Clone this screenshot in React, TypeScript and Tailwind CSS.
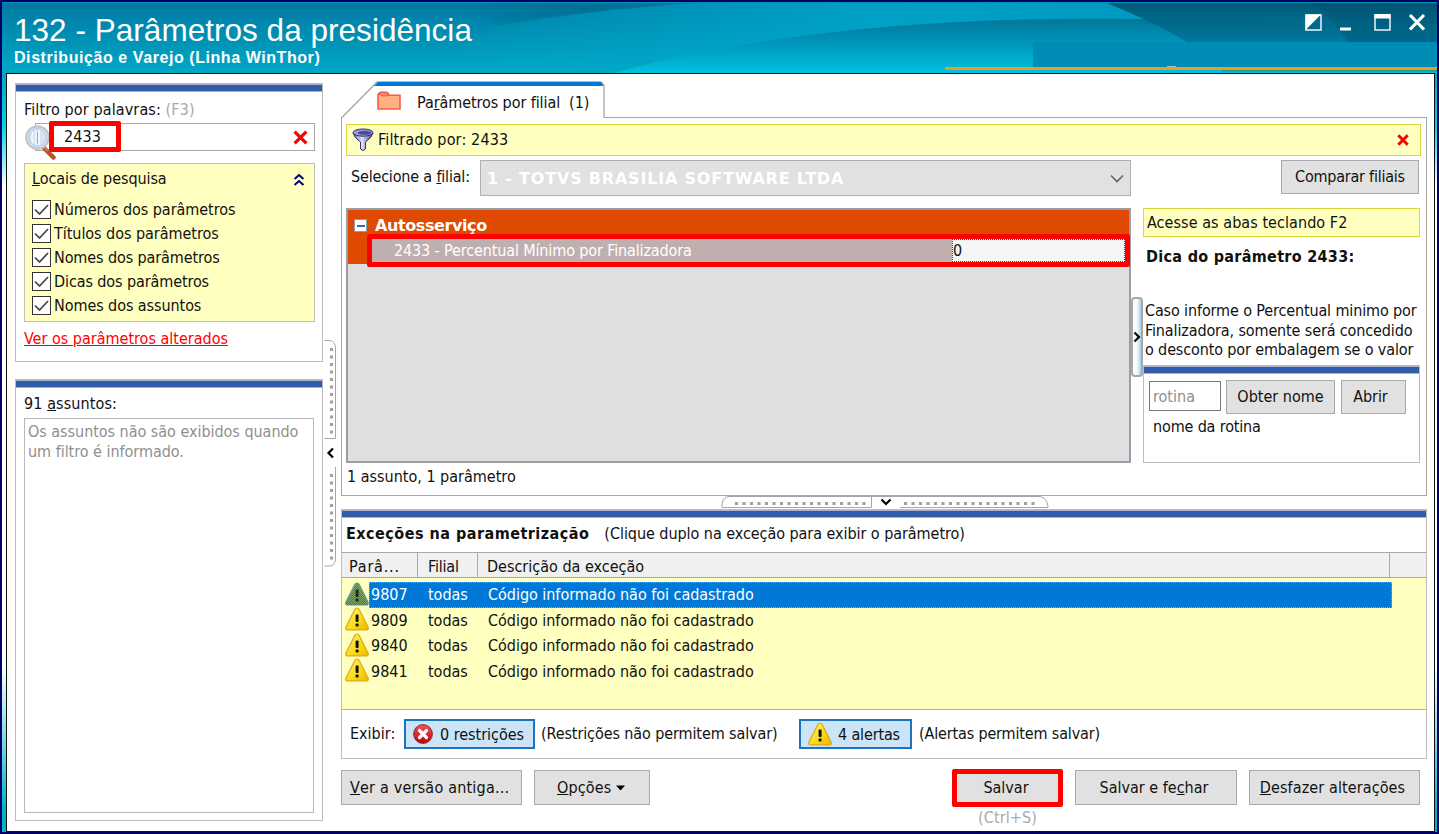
import React, { useState } from "react";

const searchPlaces = [
  { title: "Números dos parâmetros", tracking: "tracking-[-0.04px]" },
  { title: "Títulos dos parâmetros", tracking: "tracking-[-0.04px]" },
  { title: "Nomes dos parâmetros", tracking: "tracking-[-0.1px]" },
  { title: "Dicas dos parâmetros", tracking: "tracking-[-0.1px]" },
  { title: "Nomes dos assuntos", tracking: "tracking-[-0.07px]" },
];

const exceptions = [
  { id: "9807", branch: "todas", text: "Código informado não foi cadastrado" },
  { id: "9809", branch: "todas", text: "Código informado não foi cadastrado" },
  { id: "9840", branch: "todas", text: "Código informado não foi cadastrado" },
  { id: "9841", branch: "todas", text: "Código informado não foi cadastrado" },
];

function HeaderBackground() {
  return (
    <svg
      className="absolute inset-0 h-full w-full"
      viewBox="2 2 1435 71"
      preserveAspectRatio="none"
    >
      <defs>
        <linearGradient id="base" x1="0" y1="0" x2="0" y2="1">
          <stop offset="0" stopColor="#0078a2" />
          <stop offset="1" stopColor="#00a8c6" />
        </linearGradient>
        <linearGradient id="fade" x1="0" y1="0" x2="1" y2="0">
          <stop offset="0" stopColor="#00b0d0" stopOpacity="0" />
          <stop offset="0.45" stopColor="#00a9cc" stopOpacity="0.8" />
          <stop offset="1" stopColor="#0098c2" stopOpacity="0.8" />
        </linearGradient>
        <linearGradient id="shade" x1="0" y1="0" x2="1" y2="0">
          <stop offset="0" stopColor="#006a90" stopOpacity="0" />
          <stop offset="0.5" stopColor="#006a90" stopOpacity="0.7" />
          <stop offset="1" stopColor="#00789e" stopOpacity="0.7" />
        </linearGradient>
        <linearGradient id="wave" x1="0" y1="0" x2="0" y2="1">
          <stop offset="0" stopColor="#00769a" />
          <stop offset="0.35" stopColor="#008fb4" />
          <stop offset="1" stopColor="#00c2dd" />
        </linearGradient>
        <linearGradient id="dark" x1="0" y1="0" x2="0" y2="1">
          <stop offset="0" stopColor="#00506e" />
          <stop offset="1" stopColor="#007fa4" />
        </linearGradient>
      </defs>
      <rect x="2" y="2" width="1435" height="71" fill="url(#base)" />
      <path d="M500 24 Q600 6 720 2 H1437 V73 H420 Z" fill="url(#fade)" />
      <path d="M450 2 H720 Q600 8 500 26 Z" fill="url(#shade)" />
      <path d="M615 73 C700 48 830 27 980 21 Q1140 14 1437 28 V73 Z" fill="url(#wave)" />
      <path d="M1104 2 H1437 V42 H1187 Q1150 20 1104 2 Z" fill="url(#dark)" opacity="0.9" />
      <path d="M1142 19 Q1290 18 1437 34 V42 H1187 Q1165 28 1142 19 Z" fill="#006486" opacity="0.3" />
      <path d="M1309 2 H1437 V42 H1348 Q1336 22 1309 2 Z" fill="#004e6c" opacity="0.35" />
      <rect x="1033" y="42" width="404" height="25" fill="#008db5" />
      <rect x="1222" y="69" width="215" height="2.500" fill="#1c9c96" />
      <rect x="945" y="67" width="492" height="3" fill="#f7981d" />
      <rect x="2" y="2" width="1435" height="1" fill="#0090b0" />
      <rect x="1167" y="66" width="9" height="1" fill="#a5c4c4" />
    </svg>
  );
}

function WindowButtons() {
  return (
    <svg width="122" height="20" viewBox="0 0 122 20" fill="none">
      <rect x="2" y="3" width="15" height="15" stroke="#fff" strokeWidth="1.4" />
      <path d="M1.500 2.500 H17 L1.500 18 Z" fill="#fff" />
      <rect x="36" y="15.500" width="11" height="3" fill="#fff" />
      <rect x="71" y="3" width="15" height="15" stroke="#fff" strokeWidth="1.4" />
      <rect x="70.500" y="2" width="16" height="4.500" fill="#fff" />
      <path d="M106 3 L120 17.500 M120 3 L106 17.500" stroke="#fff" strokeWidth="3.200" />
    </svg>
  );
}

function MagnifierIcon() {
  return (
    <svg width="32" height="38" viewBox="0 0 32 38" fill="none">
      <path d="M20 25 L29.500 34.500" stroke="#b5532b" strokeWidth="4.500" strokeLinecap="round" />
      <path d="M19.500 23 L24 28" stroke="#d07a4c" strokeWidth="2.500" />
      <circle cx="13.500" cy="14.500" r="11.200" fill="#e6eef6" stroke="#c4c4c6" strokeWidth="2.200" />
      <circle cx="13.500" cy="14.500" r="8.800" fill="#d3e3f4" stroke="#a9c4e2" strokeWidth="1" />
      <path d="M9 9 Q7 14.500 9 20 M12 7 V22 M15 7 V22" stroke="#f4f9ff" strokeWidth="1.600" />
      <path d="M13.400 8.500 V20.500" stroke="#8ba9cc" strokeWidth="1" />
    </svg>
  );
}

function FunnelIcon() {
  return (
    <svg width="22" height="24" viewBox="0 0 22 24">
      <defs>
        <linearGradient id="funnel" x1="0" y1="0" x2="1" y2="0">
          <stop offset="0" stopColor="#6868b4" />
          <stop offset="0.45" stopColor="#e2e2f8" />
          <stop offset="1" stopColor="#3a3a86" />
        </linearGradient>
      </defs>
      <path
        d="M1 5 Q2 9.500 8.500 14 V21 Q11 24 13.500 21 V14 Q20 9.500 21 5 Z"
        fill="url(#funnel)"
        stroke="#34346e"
        strokeWidth="1"
      />
      <ellipse cx="11" cy="4.600" rx="10" ry="3.600" fill="#9d9dde" stroke="#34346e" />
      <ellipse cx="12.500" cy="4.800" rx="7" ry="2" fill="#4c4c98" />
    </svg>
  );
}

function FolderIcon() {
  return (
    <svg width="24" height="20" viewBox="0 0 24 20">
      <path
        d="M1 18 V3.500 Q2 1.200 4 1.200 H9 Q11.500 1.200 11.800 4.200 H23 V18 Z"
        fill="#ffb27f"
        stroke="#fb5b4d"
        strokeWidth="1.600"
      />
      <path d="M1.500 3 Q4 0.500 9 1.400 L11.800 4.500 Q6 6.500 1.500 3 Z" fill="#ff8668" stroke="#fb5b4d" />
    </svg>
  );
}

function RedCross({ size, width }: { size: number; width: number }) {
  return (
    <svg width={size} height={size} viewBox="0 0 14 14">
      <path d="M1.500 1.500 L12.500 12.500 M12.500 1.500 L1.500 12.500" stroke="#f00" strokeWidth={width} />
    </svg>
  );
}

function WarningIcon({ selected = false }: { selected?: boolean }) {
  return (
    <svg width="24" height="24" viewBox="0 0 24 24">
      <defs>
        <linearGradient id="warn" x1="0" y1="0" x2="1" y2="1">
          <stop offset="0" stopColor="#fff27a" />
          <stop offset="0.6" stopColor="#fbd914" />
          <stop offset="1" stopColor="#f0b400" />
        </linearGradient>
        <pattern id="mesh" width="2" height="2" patternUnits="userSpaceOnUse">
          <rect width="1" height="1" fill="#0068c0" />
          <rect x="1" y="1" width="1" height="1" fill="#0068c0" />
        </pattern>
      </defs>
      <path
        d="M12 1 Q13.400 1 14.200 2.600 L23.200 20.500 Q23.600 22.800 21.800 22.800 H2.200 Q0.400 22.800 0.800 20.500 L9.800 2.600 Q10.600 1 12 1 Z"
        fill={selected ? "#7fa860" : "url(#warn)"}
        stroke={selected ? "#5f93a0" : "#d9a81a"}
        strokeWidth="1.200"
      />
      <rect x="10.600" y="7.500" width="3" height="7.500" rx="1" fill="#111" />
      <rect x="10.600" y="16.500" width="3" height="3" rx="1" fill="#111" />
      {selected && <path d="M12 0.500 L23.500 23 H0.500 Z" fill="url(#mesh)" opacity="0.7" />}
    </svg>
  );
}

function ErrorIcon() {
  return (
    <svg width="20" height="20" viewBox="0 0 20 20">
      <defs>
        <linearGradient id="err" x1="0" y1="0" x2="0" y2="1">
          <stop offset="0" stopColor="#ea5a5e" />
          <stop offset="1" stopColor="#c00008" />
        </linearGradient>
      </defs>
      <circle cx="10" cy="10" r="9.400" fill="url(#err)" stroke="#8e2a2e" strokeWidth="1" />
      <path d="M6.500 6.500 L13.500 13.500 M13.500 6.500 L6.500 13.500" stroke="#fff" strokeWidth="3.200" strokeLinecap="round" />
    </svg>
  );
}

function LeftGrip() {
  return (
    <svg className="mt-[256px] block" width="14" height="228" viewBox="0 0 14 228" fill="none">
      <path d="M0.500 0.500 H6 Q11.500 2 11.500 8 V98.500 H0.500" stroke="#a6a6a6" />
      <path d="M11.500 127 V218 Q11.500 225.500 6 226 H0.500" stroke="#a6a6a6" />
      <path d="M7.500 8 V96" stroke="#a0a0a0" strokeWidth="3" strokeDasharray="3 4.500" />
      <path d="M7.500 134 V220" stroke="#a0a0a0" strokeWidth="3" strokeDasharray="3 4.500" />
      <path d="M9 108.500 L4.500 113 L9 117.500" stroke="#000" strokeWidth="2.200" />
    </svg>
  );
}

function BottomGrip() {
  return (
    <svg className="ml-[380px] block" width="328" height="13" viewBox="0 0 328 13" fill="none">
      <path d="M1 11.500 V8 Q2 1 8 0.500 H319 Q326 2 327 10.500 V11.500 H179" stroke="#a6a6a6" />
      <path d="M1 11.500 H150.500 V1" stroke="#a6a6a6" />
      <path d="M14 7.500 H146" stroke="#a0a0a0" strokeWidth="3" strokeDasharray="3 4.500" />
      <path d="M183 7.500 H316" stroke="#a0a0a0" strokeWidth="3" strokeDasharray="3 4.500" />
      <path d="M160.500 3.500 L165 8 L169.500 3.500" stroke="#000" strokeWidth="2.200" />
    </svg>
  );
}

function RightGrip() {
  return (
    <div className="mt-[89px] flex h-[80px] w-[12px] items-center justify-center rounded-[4px] border-2 border-[#a8a8a8] bg-linear-to-r from-white via-[#f4fafd] to-[#a9cfe3]">
      <svg className="shrink-0" width="8" height="12" viewBox="0 0 8 12" fill="none">
        <path d="M1.500 1.500 L6 6 L1.500 10.500" stroke="#000" strokeWidth="2.200" />
      </svg>
    </div>
  );
}

function BlueBar() {
  return <div className="h-[8px] shrink-0 border-y border-[#a9b2c6] bg-[#2f5da9]" />;
}

function PushButton({ className, children }: { className: string; children: React.ReactNode }) {
  return (
    <button
      className={`flex shrink-0 items-center border border-[#a9a9a9] bg-[#e1e1e1] whitespace-pre ${className}`}
    >
      {children}
    </button>
  );
}

function SearchPanel() {
  const [filter, setFilter] = useState("2433");
  const [checked, setChecked] = useState(searchPlaces.map(() => true));

  const toggle = (index: number) => {
    setChecked(checked.map((item, i) => (i === index ? !item : item)));
  };

  return (
    <div className="h-[279px] w-[308px] border border-[#bdbdbd]">
      <BlueBar />
      <div className="pl-2">
        <p className="mt-[8px] h-[21px] tracking-[0.12px]">
          Filtro por palavras: <span className="text-[#a9a9a9]">(F3)</span>
        </p>
        <div className="relative mt-[2px] ml-[11px] flex h-[28px] w-[280px] items-center border border-[#a8a8a8] pr-[6px]">
          <div className="absolute -top-[1px] -left-[12px]">
            <MagnifierIcon />
          </div>
          <input
            className="relative -mt-px ml-[13px] h-[31px] w-[72px] rounded-[2px] border-[5px] border-[#f00] bg-white pl-[10px] tracking-[0.1px] outline-none"
            value={filter}
            onChange={(e) => setFilter(e.target.value)}
          />
          <div className="ml-auto cursor-pointer" onClick={() => setFilter("")}>
            <RedCross size={15} width={3} />
          </div>
        </div>
        <div className="mt-[12px] h-[159px] w-[291px] border border-[#c0c0b4] bg-[#ffffc0] pt-[5px] pl-[7px]">
          <div className="flex h-[20px] items-center justify-between pr-[9px]">
            <p className="tracking-[-0.08px]">
              <u>L</u>ocais de pesquisa
            </p>
            <svg width="12" height="14" viewBox="0 0 12 14" fill="none">
              <path d="M1.500 7 L6 3 L10.500 7 M1.500 13 L6 9 L10.500 13" stroke="#000080" strokeWidth="2" />
            </svg>
          </div>
          <div className="mt-[8px]">
            {searchPlaces.map((place, index) => (
              <div key={place.title} className="flex h-[24px] items-center gap-[3px]" onClick={() => toggle(index)}>
                <div className="flex h-[19px] w-[19px] items-center justify-center border border-[#333] bg-white">
                  {checked[index] && (
                    <svg width="17" height="17" viewBox="0 0 17 17" fill="none">
                      <path d="M2 8.500 L6.500 13 L15 4" stroke="#444" strokeWidth="1.700" />
                    </svg>
                  )}
                </div>
                <p className={`pt-px ${place.tracking}`}>{place.title}</p>
              </div>
            ))}
          </div>
        </div>
        <p className="mt-[7px] tracking-[0px] text-[#f00] underline">Ver os parâmetros alterados</p>
      </div>
    </div>
  );
}

function SubjectsPanel() {
  return (
    <div className="mt-[17px] flex h-[442px] w-[308px] flex-col border border-[#bdbdbd]">
      <BlueBar />
      <p className="mt-[6px] ml-2 h-[20px] tracking-[0.1px]">
        91 <u>a</u>ssuntos:
      </p>
      <div className="mt-[4px] ml-[8px] h-[395px] w-[290px] border border-[#b9b9b9] pt-[3px] pl-[3px] leading-[19.500px] tracking-[-0.03px] whitespace-pre text-[#8f8f8f]">
        {"Os assuntos não são exibidos quando\num filtro é informado."}
      </div>
    </div>
  );
}

function BranchTab() {
  return (
    <div className="relative z-10 flex h-[37px] w-[264px] items-center pt-[6px] pl-[36px]">
      <svg className="absolute top-0 left-0" width="264" height="37" viewBox="0 0 264 37">
        <path d="M0.500 37 L36 1 H260 L263 4 V37" fill="#fff" stroke="#a6a6a6" strokeWidth="1.300" />
        <path d="M33 5 L37 1 H260 L262.500 5 Z" fill="#0078d7" />
      </svg>
      <div className="relative flex items-center">
        <div className="-mt-[3px]">
          <FolderIcon />
        </div>
        <p className="ml-[16px] tracking-[-0.08px] whitespace-pre">
          Pa<u>r</u>âmetros por filial{"  "}(1)
        </p>
      </div>
    </div>
  );
}

function ParameterGrid() {
  return (
    <div className="h-[255px] w-[785px] border-2 border-[#9a9ea8] bg-[#dfdfdf]">
      <div className="flex h-[25px] items-center bg-[#df4900] pt-[6px] pl-[6px] text-white">
        <div className="flex h-[13px] w-[13px] items-center justify-center border border-[#8c9bb0] bg-white">
          <div className="h-[2px] w-[8px] bg-[#3f68ae]" />
        </div>
        <p className="ml-[8px] font-['DejaVu_Sans',sans-serif] font-bold tracking-[-0.4px]">Autosserviço</p>
      </div>
      <div className="flex h-[29px] bg-linear-to-r from-[#df4900] from-[19px] to-transparent to-[19px]">
        <div className="-mt-[1px] ml-[19px] flex h-[33px] w-[763px] shrink-0 rounded-[2px] border-[5px] border-[#f00]">
          <div className="flex w-[580px] items-center bg-[#bfb0af] pt-px pl-[22px] tracking-[-0.13px] text-white">
            2433 - Percentual Mínimo por Finalizadora
          </div>
          <div className="flex flex-1 items-center border border-dotted border-[#444] bg-[#f5f5f5]">0</div>
        </div>
      </div>
    </div>
  );
}

function HintColumn() {
  return (
    <div className="flex h-[255px] w-[277px] flex-col">
      <div className="flex h-[29px] items-center border border-[#dcd83c] bg-[#ffffc0] pt-px pl-[3px] tracking-[0.06px]">
        Acesse as abas teclando F2
      </div>
      <p className="mt-[10px] ml-[3px] font-bold tracking-[0.3px]">Dica do parâmetro 2433:</p>
      <p className="mt-[34px] ml-[2px] h-[64px] leading-[19.500px] tracking-[-0.13px] whitespace-pre">
        {"Caso informe o Percentual minimo por\nFinalizadora, somente será concedido\no desconto por embalagem se o valor"}
      </p>
      <div className="flex-1 border border-[#bdbdbd]">
        <BlueBar />
        <div className="flex pt-[6px] pl-[5px]">
          <input
            className="mt-px h-[30px] w-[72px] border border-[#7a7a7a] bg-white pl-[3px] tracking-[0px] outline-none placeholder:text-[#8f8f8f]"
            placeholder="rotina"
          />
          <PushButton className="ml-[5px] h-[34px] w-[109px] justify-center tracking-[0px]">Obter nome</PushButton>
          <PushButton className="ml-[6px] h-[34px] w-[65px] justify-center pr-[6px] tracking-[-0.1px]">Abrir</PushButton>
        </div>
        <p className="mt-[3px] ml-[9px] tracking-[-0.15px]">nome da rotina</p>
      </div>
    </div>
  );
}

function BranchPanel() {
  return (
    <div className="-mt-px h-[379px] w-[1086px] border border-[#a6a6a6] pt-[6px] pl-[4px]">
      <div className="flex h-[32px] w-[1075px] items-center border border-[#dcd83c] bg-[#ffffc0] pr-[11px] pl-[5px]">
        <FunnelIcon />
        <p className="ml-[4px] tracking-[0.15px]">Filtrado por: 2433</p>
        <div className="ml-auto">
          <RedCross size={12} width={3.5} />
        </div>
      </div>
      <div className="mt-[4px] flex h-[36px]">
        <p className="mt-[7px] ml-[5px] w-[129px] tracking-[-0.18px]">
          Selecione a <u>f</u>ilial:
        </p>
        <div className="flex h-[36px] w-[651px] items-center justify-between border border-[#b0b0b0] bg-[#e1e1e1] pr-[6px] pl-[6px]">
          <p className="pt-[2px] font-['DejaVu_Sans',sans-serif] font-bold tracking-[0.8px] text-white">
            1 - TOTVS BRASILIA SOFTWARE LTDA
          </p>
          <svg width="14" height="9" viewBox="0 0 14 9" fill="none">
            <path d="M1 1.500 L7 7.500 L13 1.500" stroke="#666" strokeWidth="1.700" />
          </svg>
        </div>
        <PushButton className="ml-[150px] h-[34px] w-[138px] justify-center tracking-[-0.23px]">
          Comparar filiais
        </PushButton>
      </div>
      <div className="mt-[12px] flex">
        <ParameterGrid />
        <RightGrip />
        <HintColumn />
      </div>
      <p className="mt-[4px] ml-px tracking-[0px]">1 assunto, 1 parâmetro</p>
    </div>
  );
}

function ExceptionsPanel() {
  const [selectedId, setSelectedId] = useState("9807");

  return (
    <div className="flex h-[250px] w-[1086px] flex-col border border-[#bdbdbd]">
      <BlueBar />
      <div className="flex h-[34px] items-center pb-[2px] pl-[4px]">
        <p className="font-bold tracking-[0.48px]">Exceções na parametrização</p>
        <p className="ml-[15px] tracking-[-0.05px]">(Clique duplo na exceção para exibir o parâmetro)</p>
      </div>
      <div className="flex h-[26px] shrink-0 items-center border-y border-[#a8a8a8] bg-[#f0f0f0]">
        <div className="flex h-full w-[76px] items-center border-r border-[#a8a8a8] pt-[4px] pl-[7px] tracking-[0.8px]">
          Parâ...
        </div>
        <div className="flex h-full w-[60px] items-center border-r border-[#a8a8a8] pt-[4px] pl-[10px] tracking-[-0.2px]">
          Filial
        </div>
        <div className="flex h-full w-[912px] items-center border-r border-[#a8a8a8] pt-[4px] pl-[9px] tracking-[0px]">
          Descrição da exceção
        </div>
      </div>
      <div className="h-[131px] shrink-0 bg-[#ffffc0] pt-[4px]">
        {exceptions.map((item) => {
          const selected = item.id === selectedId;
          return (
            <div
              key={item.id}
              className="flex h-[25.500px] items-center pl-[3px] tracking-[-0.03px]"
              onClick={() => setSelectedId(item.id)}
            >
              <div className="-mt-[2px]">
                <WarningIcon selected={selected} />
              </div>
              <div
                className={
                  selected
                    ? "flex h-full w-[1023px] items-center border border-dotted border-[#ff8728] bg-[#0078d7] pt-px text-white"
                    : "flex h-full w-[1023px] items-center border border-transparent pt-px"
                }
              >
                <p className="w-[58px] pl-px">{item.id}</p>
                <p className="w-[60px]">{item.branch}</p>
                <p>{item.text}</p>
              </div>
            </div>
          );
        })}
      </div>
      <div className="flex flex-1 items-center border-t border-[#b0b0a4] pl-[8px]">
        <p className="w-[54px] pb-px tracking-[0px]">Exibir:</p>
        <div className="flex h-[30px] w-[131px] items-center border-2 border-[#1e74bc] bg-[#cbe4f8] pl-[7px]">
          <ErrorIcon />
          <p className="ml-[7px] pt-px tracking-[-0.02px] whitespace-pre">0 restrições</p>
        </div>
        <p className="ml-[6px] w-[258px] pb-px tracking-[-0.1px] whitespace-pre">(Restrições não permitem salvar)</p>
        <div className="flex h-[30px] w-[113px] items-center border-2 border-[#1e74bc] bg-[#cbe4f8] pl-[7px]">
          <WarningIcon />
          <p className="ml-[6px] pt-px tracking-[-0.15px] whitespace-pre">4 alertas</p>
        </div>
        <p className="ml-[7px] pb-px tracking-[-0.15px]">(Alertas permitem salvar)</p>
      </div>
    </div>
  );
}

function Footer() {
  return (
    <div className="mt-[11px] flex w-[1086px]">
      <PushButton className="h-[35px] w-[181px] pl-[8px] tracking-[0.2px]">
        <u>V</u>er a versão antiga...
      </PushButton>
      <PushButton className="ml-[12px] h-[35px] w-[116px] pl-[22px] tracking-[0.15px]">
        <u>O</u>pções
        <svg className="ml-[5px]" width="9" height="6" viewBox="0 0 9 6">
          <path d="M0 0.500 H9 L4.500 5.500 Z" fill="#000" />
        </svg>
      </PushButton>
      <div className="-mt-px ml-[302px] flex w-[111px] flex-col items-center">
        <button className="h-[38px] w-[111px] rounded-[2px] border-[5px] border-[#f00] bg-[#e1e1e1] pr-[3px] tracking-[0px]">
          Salvar
        </button>
        <p className="mt-px tracking-[0.1px] text-[#a9a9a9]">(Ctrl+S)</p>
      </div>
      <PushButton className="ml-[12px] h-[35px] w-[162px] justify-center pr-[4px] tracking-[0px]">
        Salvar e fe<u>c</u>har
      </PushButton>
      <PushButton className="ml-[12px] h-[35px] w-[171px] justify-center pr-[4px] tracking-[0.1px]">
        <u>D</u>esfazer alterações
      </PushButton>
    </div>
  );
}

export default function App() {
  return (
    <div className="flex h-[834px] w-[1439px] flex-col overflow-hidden border-2 border-[#000066] font-['DejaVu_Sans_Condensed','DejaVu_Sans',sans-serif] text-[16px] leading-[20px] text-[#111]">
      <div className="relative flex h-[71px] shrink-0 justify-between">
        <HeaderBackground />
        <div className="relative pl-[12px] font-['Liberation_Sans',Arial,sans-serif] text-white">
          <h1 className="mt-[11px] text-[31.500px] leading-[34px] tracking-[0.03px]">132 - Parâmetros da presidência</h1>
          <p className="mt-[1px] text-[16px] leading-[20px] font-bold tracking-[0.57px]">
            Distribuição e Varejo (Linha WinThor)
          </p>
        </div>
        <div className="relative mt-[10px] mr-[11px]">
          <WindowButtons />
        </div>
      </div>
      <div className="flex flex-1 bg-[linear-gradient(#00a8c6,#00d4e4_7%,#fff_15%,#fff_78%,#00b4c8_97%)]">
        <div className="ml-[4px] flex h-[759px] w-[1429px] border border-[#111] bg-white">
          <div className="pt-[9px] pl-2">
            <SearchPanel />
            <SubjectsPanel />
          </div>
          <div className="ml-px w-[17px] pt-[10px]">
            <LeftGrip />
          </div>
          <div className="pt-[7px]">
            <BranchTab />
            <BranchPanel />
            <BottomGrip />
            <ExceptionsPanel />
            <Footer />
          </div>
        </div>
      </div>
    </div>
  );
}
